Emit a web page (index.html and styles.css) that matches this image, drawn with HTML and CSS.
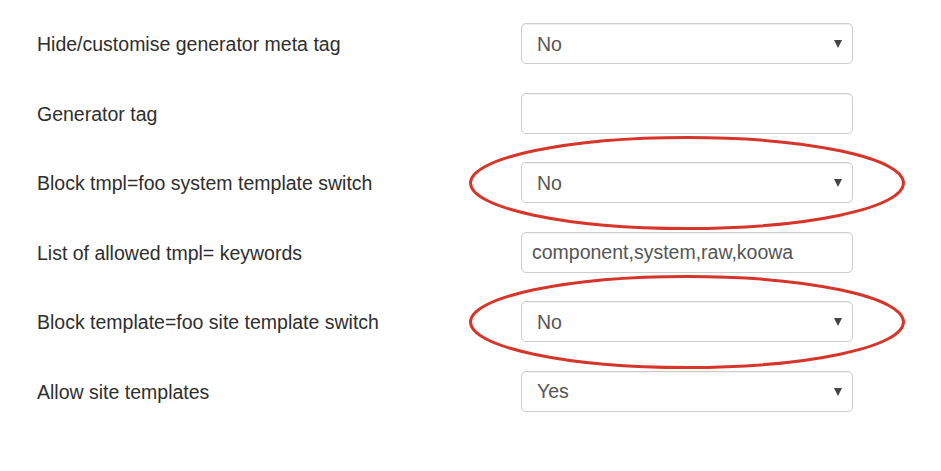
FILE: index.html
```html
<!DOCTYPE html>
<html lang="en">
<head>
<meta charset="utf-8">
<title>Template settings</title>
<link rel="stylesheet" href="styles.css">
</head>
<body>
<form class="form">
  <div class="row">
    <label class="label">Hide/customise generator meta tag</label>
    <div class="field"><div class="select"><span>No</span><i class="caret"></i></div></div>
  </div>
  <div class="row">
    <label class="label">Generator tag</label>
    <div class="field"><div class="input"></div></div>
  </div>
  <div class="row">
    <label class="label">Block tmpl=foo system template switch</label>
    <div class="field">
      <div class="select"><span>No</span><i class="caret"></i></div>
      <svg class="ring" width="440" height="98" viewBox="0 0 440 98"><ellipse cx="220" cy="49" rx="216.5" ry="45.5" fill="none" stroke="#d8352a" stroke-width="3"/></svg>
    </div>
  </div>
  <div class="row">
    <label class="label">List of allowed tmpl= keywords</label>
    <div class="field"><div class="input"><span>component,system,raw,koowa</span></div></div>
  </div>
  <div class="row">
    <label class="label">Block template=foo site template switch</label>
    <div class="field">
      <div class="select"><span>No</span><i class="caret"></i></div>
      <svg class="ring" width="440" height="98" viewBox="0 0 440 98"><ellipse cx="220" cy="49" rx="216.5" ry="45.5" fill="none" stroke="#d8352a" stroke-width="3"/></svg>
    </div>
  </div>
  <div class="row">
    <label class="label">Allow site templates</label>
    <div class="field"><div class="select"><span>Yes</span><i class="caret"></i></div></div>
  </div>
</form>
</body>
</html>
```
FILE: styles.css
```css
html, body {
  margin: 0;
  padding: 0;
  background: #ffffff;
}
body {
  width: 941px;
  height: 471px;
  overflow: hidden;
  font-family: "Liberation Sans", Arial, sans-serif;
}
.form {
  display: grid;
  grid-template-columns: 484px 332px;
  grid-auto-rows: 41px;
  row-gap: 28.6px;
  padding: 23px 0 0 37px;
}
.row {
  display: contents;
}
.label {
  font-size: 19.5px;
  color: #2e2e2e;
  align-self: center;
  line-height: 22px;
  padding-top: 1px;
}
.field {
  position: relative;
}
.select, .input {
  box-sizing: border-box;
  height: 41px;
  border: 1px solid #cccccc;
  border-radius: 5px;
  box-shadow: inset 0 1px 1px rgba(0,0,0,0.06);
  display: flex;
  align-items: center;
  padding: 1px 0 0 15px;
  font-size: 19.5px;
  color: #555555;
  background: #fff;
}
.input {
  padding-left: 10px;
}
.select span, .input span {
  flex: 1;
}
.caret {
  width: 0;
  height: 0;
  border-left: 4.5px solid transparent;
  border-right: 4.5px solid transparent;
  border-top: 8px solid #444444;
  margin-right: 10px;
  margin-top: 0;
}
.ring {
  position: absolute;
  left: -54px;
  top: -28px;
  overflow: visible;
  pointer-events: none;
}
```
